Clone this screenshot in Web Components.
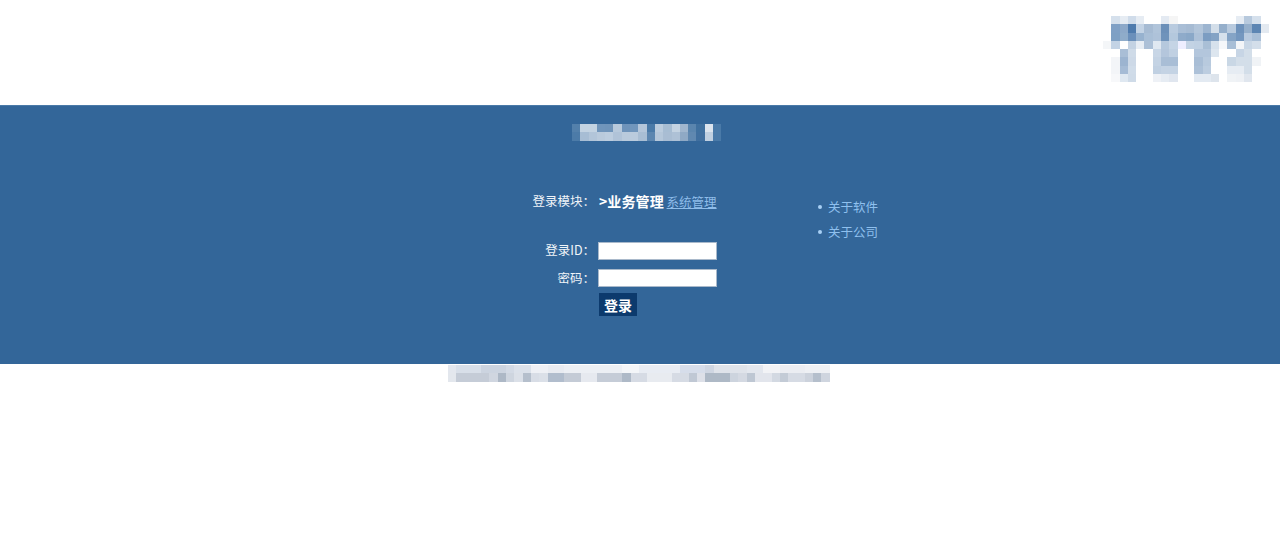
<!DOCTYPE html>
<html lang="zh">
<head>
<meta charset="utf-8">
<title>登录</title>
<style>
html, body { margin: 0; padding: 0; background: #fff; }
body { font-family: "Noto Sans CJK SC", "Liberation Sans", sans-serif; font-size: 13px; }
</style>
</head>
<body>
<login-page></login-page>

<script>
(function() {
    // Pixelated block: one string per row, cells split by spaces, "-" = transparent
    class PixelBlock extends HTMLElement {
        constructor() {
            super();
            this.attachShadow({ mode: "open" });
        }

        connectedCallback() {
            const rows = this.getAttribute("rows").split("|").map(r => r.trim().split(/\s+/));
            const cell = this.getAttribute("cell") || "8.3";
            const cols = rows[0].length;
            let cells = "";
            rows.forEach(row => row.forEach(c => {
                cells += `<i style="background:${c === "-" ? "transparent" : "#" + c}"></i>`;
            }));
            this.shadowRoot.innerHTML = `
            <style>
            :host { display: block; width: ${cols * cell}px; height: ${rows.length * cell}px; }
            .grid {
                display: grid;
                grid-template-columns: repeat(${cols}, ${cell}px);
                grid-auto-rows: ${cell}px;
                filter: blur(0.5px);
            }
            i { display: block; }
            </style>
            <div class="grid">${cells}</div>`;
        }
    }

    const formTemplate = document.createElement("template");
    formTemplate.innerHTML = `
    <style>
    :host {
        display: grid;
        grid-template-columns: 128px 119px;
        grid-template-rows: 30px 19px 29px 27px 28px;
        align-items: center;
        color: #fff;
        font-size: 12.5px;
    }

    .label { text-align: right; color: #f0f4f8; padding-right: 3px; }
    .module { white-space: nowrap; margin-left: 1px; }
    .module b { font-size: 14px; color: #fff; letter-spacing: 0.1px; }
    .module a { color: #8fbdea; text-decoration: underline; }
    .spacer { grid-column: 1 / 3; }

    input {
        display: block;
        box-sizing: border-box;
        width: 119px;
        height: 18px;
        margin: 0;
        padding: 0;
        background: #fff;
        border: 1px solid #a9b9cb;
    }

    input[type=text] { margin-top: 4px; }
    input[type=password] { margin-top: 2px; }

    button {
        display: block;
        width: 38px;
        height: 23px;
        margin: 0 0 0 1px;
        padding: 0;
        border: 0;
        background: #0c3a6d;
        color: #fff;
        font: bold 14px "Noto Sans CJK SC", "Liberation Sans", sans-serif;
    }
    </style>
    <div class="label">登录模块：</div>
    <div class="module"><b>&gt;业务管理</b> <a>系统管理</a></div>
    <div class="spacer"></div>
    <div class="label">登录ID：</div>
    <input type="text">
    <div class="label">密码：</div>
    <input type="password">
    <div></div>
    <button>登录</button>
    `;

    class LoginForm extends HTMLElement {
        constructor() {
            super();
            this.attachShadow({ mode: "open" });
            this.shadowRoot.append(formTemplate.content.cloneNode(true));
        }
    }

    const linksTemplate = document.createElement("template");
    linksTemplate.innerHTML = `
    <style>
    :host {
        display: block;
        color: #8fc0ee;
        font-size: 12.5px;
    }

    ul { list-style: none; margin: 0; padding: 0; }

    li {
        display: flex;
        align-items: center;
        height: 25px;
    }

    li::before {
        content: "";
        width: 4px;
        height: 4px;
        margin: 1px 6px 0 1px;
        border-radius: 50%;
        background: #a8d0f5;
    }
    </style>
    <ul>
        <li>关于软件</li>
        <li>关于公司</li>
    </ul>
    `;

    class SideLinks extends HTMLElement {
        constructor() {
            super();
            this.attachShadow({ mode: "open" });
            this.shadowRoot.append(linksTemplate.content.cloneNode(true));
        }
    }

    const LOGO = [
        "- d5e0ec e6ecf3 d0dcea e6ecf3 - - e4eaf2 f5f5f5 - - - - - - - e6ecf3 b7c9dd d5e0ec -",
        "- 7fa0c5 8da9c9 4f7bad c3d3e5 a6bbd3 b0c4da 6c90b9 b9cbdf a9bed6 a6bbd3 b2c5da 9db5d0 d3dee9 95afcb b8cade 6e92bb 95afcb 5d86b3 e3e9f0",
        "- 7ea0c4 8facca 6b90bb 97b2cf a9bfd7 aec2d9 6f93bb b4c8dd 8fabca 8aa8c8 adc1d8 7c9dc2 84a3c5 d6e1ec 85a4c6 7497bf b8cadf a9bfd7 -",
        "f4f6f8 c3d3e5 - c3d2e3 e7edf4 acc0d7 e0e8f1 b5c8dd c5d4e5 eeeeff c3d3e4 c0d1e3 a9bfd6 d6e1ec f5f7fa a8bed6 f3f5f8 c9d7e6 d3deea -",
        "- - a9bed6 cfdbe8 - - c8d6e6 b4c6dc c0d0e2 - - b3c6dc b3c6dc dde6ef - - c7d5e5 d3dee9 - -",
        "- f3f5f8 9cb4d0 cdd9e7 - - c4d3e4 a9bed6 a9bed6 - - a9bed6 b8cade - - c9d7e5 d3dee9 d3dee9 f0f3f6 -",
        "- f3f5f8 a5bbd5 d0dce9 - - c0d0e2 c4d3e4 c4d3e4 - - adc1d8 bccde0 - - e6ecf3 e6ecf3 d3dee9 - -",
        "- f7f8fa dfe8f1 cfdbe8 - - eef1f6 e6ecf3 e0e6ef - - e3eaf2 e3eaf2 dde4ec - f0f3f6 eef1f5 e0e6ee - -"
    ].join("|");

    const TITLE = [
        "5380ab c3d3e2 c3d3e2 7095bb 6f94ba b7c9dc 6e93ba 7196bc b4c6da 4a7aa8 bbccde a7bdd3 c4d3e2 a0b6ce 5a85ae 3f709f dbe4ee 4a7aa8",
        "4c7ba8 a7bdd4 b2c5d9 b9cadc bccddf b0c3d8 b9cadc bacbdd a9bed4 5c86b0 b5c7da a9bdd3 aec1d6 8fa9c5 6088b0 406f9f c0d0e1 4a7aa8"
    ].join("|");

    const FOOTER = [
        "e3e7ee d8dfe9 d8dfe9 d8dfe9 ccd4e0 ccd4e0 ccd4e0 d3dae5 dbe1ea dbe1ea eef0f5 eef0f5 e8ebf1 e8ebf1 eceff4 eceff4 eceff4 eceff4 eceff4 eceff4 eceff4 f3f5f8 f3f5f8 e8ecf3 e8ecf3 e8ecf3 e8ecf3 e8ecf3 d6ddea d6ddea d6ddea cfd6e2 dfe3ea dfe3ea dfe3ea dfe3ea e3e7ee e3e7ee f2f3f6 f2f3f6 ebedf2 ebedf2 ebedf2 eef0f4 eef0f4 eef0f4",
        "e3e7ed c5ccd7 c5ccd7 c5ccd7 c5ccd7 d0d6e0 adb8c6 ced5df dbe0e8 b5bfcc d8dde6 dbe0e8 b1bdcd b1bdcd c4cbd6 c4cbd6 e6e9ef e6e9ef c5ccd7 c5ccd7 c5ccd7 aeb9c7 d6dbe4 d6dbe4 e8ebf0 e8ebf0 e8ebf0 d6dbe4 d6dbe4 c0c8d4 dde0e8 aeb9c6 aeb9c6 aeb9c6 cdd4de d4d9e2 bec7d3 e2e5ec e2e5ec d3d9e2 c3cbd6 d6dbe4 d6dbe4 ccd2dc b5bfcc cfd5df"
    ].join("|");

    const pageTemplate = document.createElement("template");
    pageTemplate.innerHTML = `
    <style>
    :host { display: block; }

    .top {
        display: flex;
        justify-content: flex-end;
        box-sizing: border-box;
        height: 105px;
        padding: 16px 11px 0 0;
    }

    .band {
        box-sizing: border-box;
        height: 259px;
        padding-top: 18px;
        background: #336699;
        border-top: 1px solid #4a7aa8;
    }

    .title { margin-left: 572px; }

    .main {
        display: flex;
        align-items: flex-start;
        margin: 45px 0 0 470px;
    }

    side-links { margin: 8px 0 0 100px; }

    .bottom { padding: 1px 0 0 448px; background: #fff; }
    </style>
    <div class="top"><pixel-block rows="${LOGO}"></pixel-block></div>
    <div class="band">
        <pixel-block class="title" rows="${TITLE}"></pixel-block>
        <div class="main">
            <login-form></login-form>
            <side-links></side-links>
        </div>
    </div>
    <div class="bottom"><pixel-block rows="${FOOTER}"></pixel-block></div>
    `;

    class LoginPage extends HTMLElement {
        constructor() {
            super();
            this.attachShadow({ mode: "open" });
            this.shadowRoot.append(pageTemplate.content.cloneNode(true));
        }
    }

    customElements.define("pixel-block", PixelBlock);
    customElements.define("login-form", LoginForm);
    customElements.define("side-links", SideLinks);
    customElements.define("login-page", LoginPage);
})();
</script>
</body>
</html>
